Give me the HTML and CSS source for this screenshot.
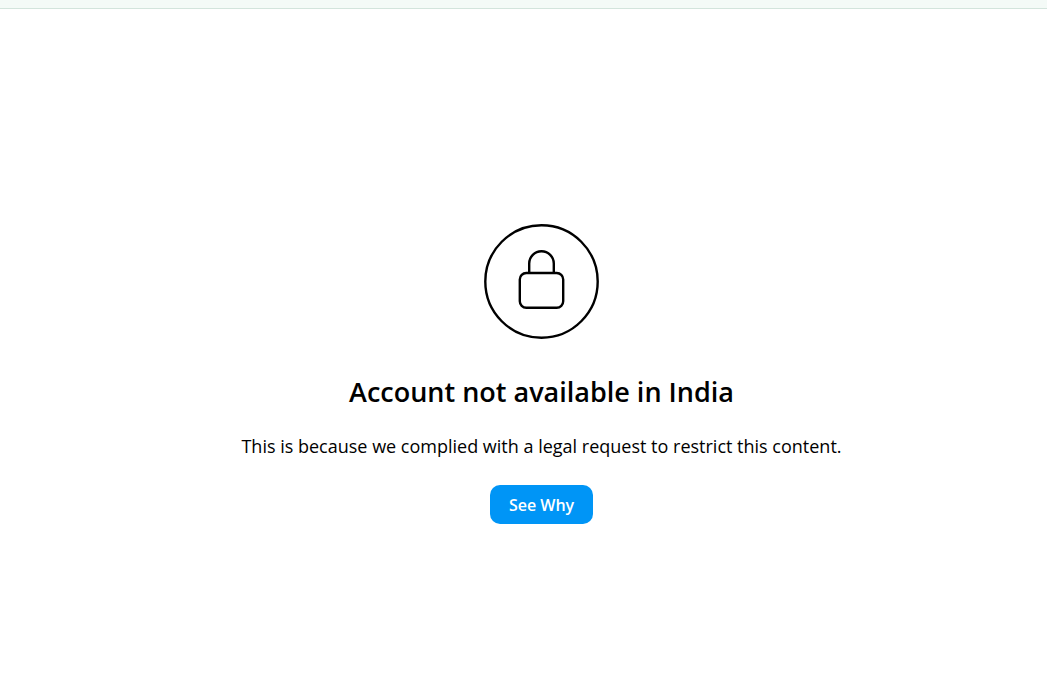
FILE: index.html
```html
<!DOCTYPE html>
<html lang="en">
<head>
    <meta charset="UTF-8">
    <meta name="viewport" content="width=device-width, initial-scale=1.0">
    <title>Account not available</title>
    <link rel="stylesheet" href="styles.css">
</head>
<body>
    <header class="top-bar"></header>
    <main class="notice">
        <svg class="lock-icon" viewBox="0 0 115 115" fill="none" stroke="#000" stroke-width="2.4" aria-hidden="true">
            <circle cx="57.5" cy="57.5" r="56.2"/>
            <rect x="35.8" y="49" width="43.4" height="34.8" rx="6.5"/>
            <path d="M45.2 49V39.6a12.3 12.3 0 0 1 24.6 0V49"/>
        </svg>
        <h1 class="title">Account not available in India</h1>
        <p class="message">This is because we complied with a legal request to restrict this content.</p>
        <button class="button" type="button">See Why</button>
    </main>
</body>
</html>
```
FILE: styles.css
```css
body {
    display: flex;
    flex-direction: column;
    min-height: 100vh;
    margin: 0;
    background-color: #fff;
    color: #000;
    font-family: "Segoe UI", "Open Sans", "Noto Sans", sans-serif;
}
.top-bar {
    height: 8px;
    background-color: #f4faf7;
    border-bottom: 1px solid #d3e4dc;
}
.notice {
    flex: 1;
    display: flex;
    flex-direction: column;
    align-items: center;
    justify-content: center;
    padding: 43px 0 0 36px;
}
.lock-icon {
    width: 115px;
    height: 115px;
}
.title {
    margin: 31px 0 0;
    font-size: 27px;
    line-height: 44px;
    font-weight: 600;
}
.message {
    margin: 20px 0 0;
    font-size: 18px;
    line-height: 24px;
}
.button {
    margin-top: 27px;
    padding: 0 19px;
    height: 39px;
    border: none;
    border-radius: 10px;
    background-color: #0095f6;
    color: #fff;
    font-family: inherit;
    font-size: 16px;
    font-weight: 600;
    cursor: pointer;
}
.button:hover {
    background-color: #1877f2;
}
```
